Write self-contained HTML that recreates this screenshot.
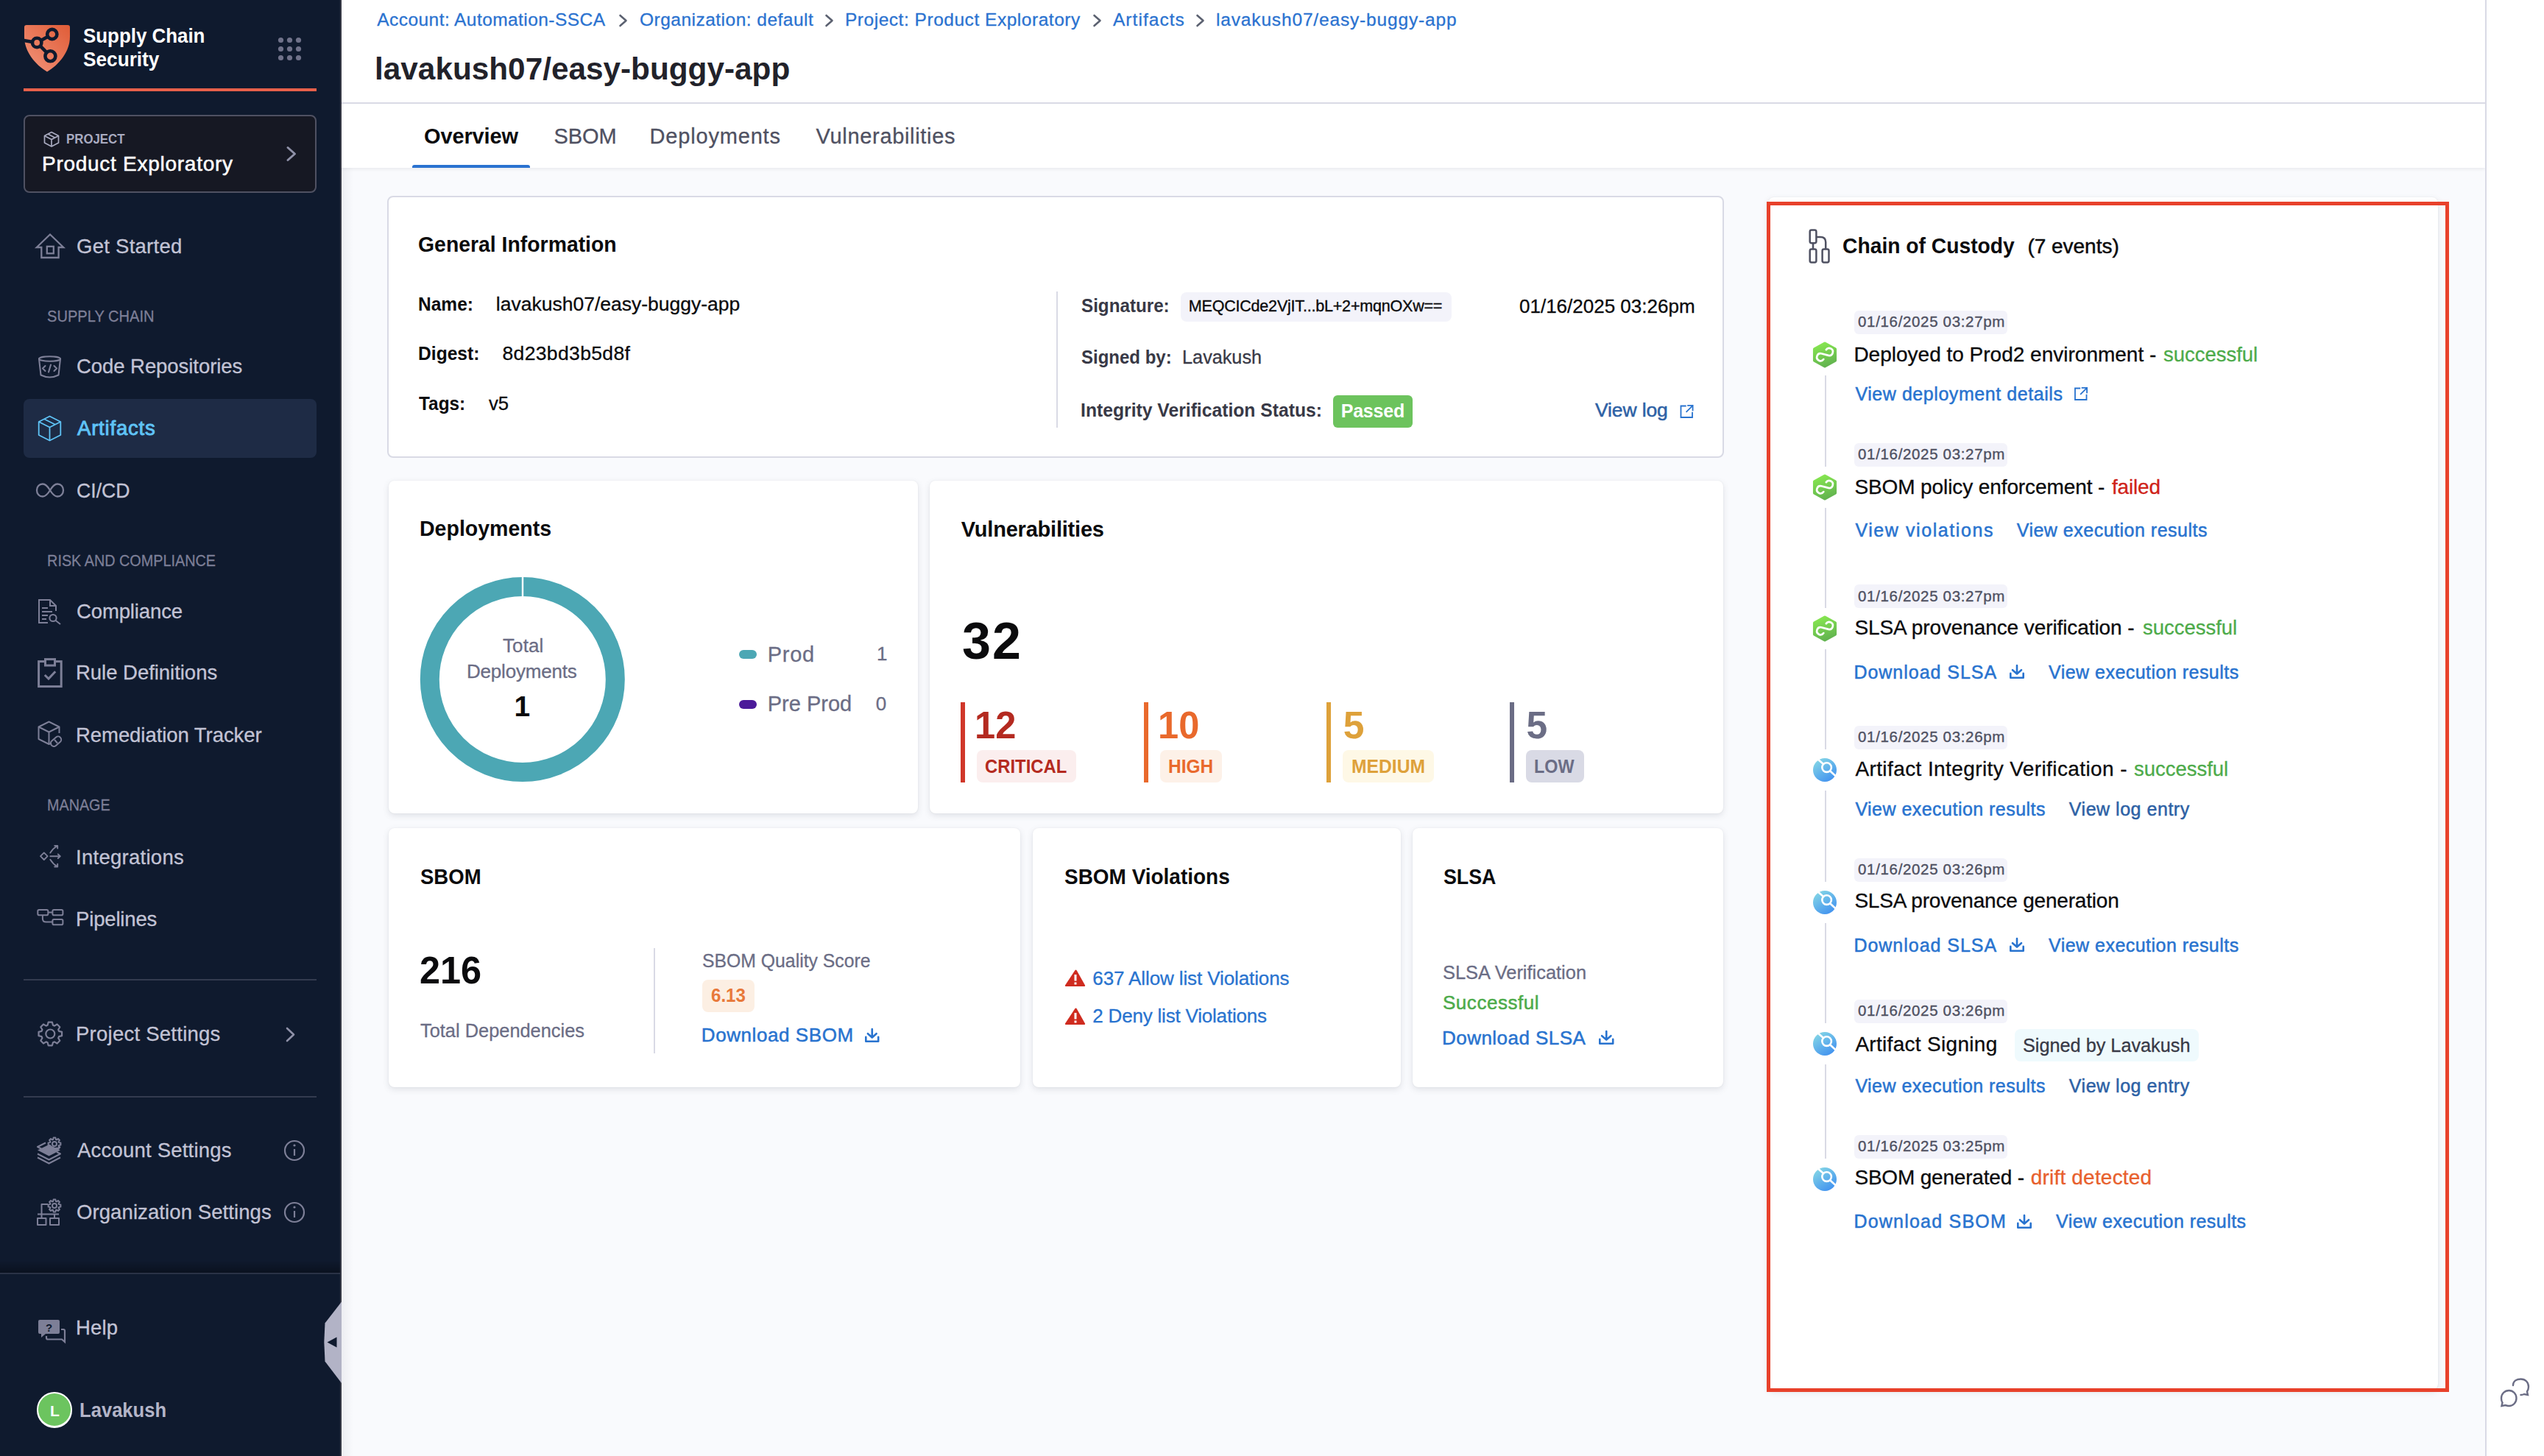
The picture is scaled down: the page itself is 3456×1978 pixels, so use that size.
<!DOCTYPE html>
<html><head><meta charset="utf-8"><title>Supply Chain Security</title>
<style>
html,body{margin:0;padding:0;}
body{width:3456px;height:1978px;position:relative;overflow:hidden;background:#f9fafd;font-family:"Liberation Sans",sans-serif;}
svg{position:absolute;overflow:visible;}
</style></head><body>
<div style="position:absolute;left:464px;top:0px;width:2912px;height:228px;background:#fff;box-shadow:0 2px 4px rgba(96,97,112,0.10);"></div>
<div style="position:absolute;left:464px;top:139px;width:2912px;height:2px;background:#d9dae5;"></div>
<div style="position:absolute;left:3376px;top:0px;width:2px;height:1978px;background:#d9dae5;"></div>
<div style="position:absolute;left:3378px;top:0px;width:78px;height:1978px;background:#fff;"></div>
<div style="position:absolute;left:0px;top:0px;width:464px;height:1978px;background:#0f1a2e;"></div>
<div style="position:absolute;left:462px;top:0px;width:2px;height:1978px;background:#363845;"></div>
<div style="position:absolute;left:464px;top:228px;width:16px;height:1750px;background:linear-gradient(90deg,rgba(40,41,61,0.06),rgba(40,41,61,0));"></div>
<div style="position:absolute;left:32px;top:120px;width:398px;height:4px;background:#e7604a;"></div>
<div style="position:absolute;left:32px;top:156px;width:398px;height:106px;background:#161823;border:2px solid #4f5162;border-radius:8px;box-sizing:border-box;"></div>
<div style="position:absolute;left:32px;top:542px;width:398px;height:80px;background:#1e2b45;border-radius:8px;"></div>
<div style="position:absolute;left:32px;top:1330px;width:398px;height:2px;background:#333b4f;"></div>
<div style="position:absolute;left:32px;top:1489px;width:398px;height:2px;background:#333b4f;"></div>
<div style="position:absolute;left:0px;top:1712px;width:462px;height:18px;background:linear-gradient(rgba(0,0,0,0),rgba(0,0,0,0.35));"></div>
<div style="position:absolute;left:0px;top:1729px;width:462px;height:2px;background:#2a3246;"></div>
<div style="position:absolute;left:526px;top:266px;width:1816px;height:356px;background:#fff;border:2px solid #d9dae5;border-radius:8px;box-sizing:border-box;"></div>
<div style="position:absolute;left:528px;top:653px;width:719px;height:452px;background:#fff;border-radius:8px;box-shadow:0 0 2px rgba(40,41,61,0.07),0 3px 9px rgba(96,97,112,0.16);"></div>
<div style="position:absolute;left:1263px;top:653px;width:1078px;height:452px;background:#fff;border-radius:8px;box-shadow:0 0 2px rgba(40,41,61,0.07),0 3px 9px rgba(96,97,112,0.16);"></div>
<div style="position:absolute;left:528px;top:1125px;width:858px;height:352px;background:#fff;border-radius:8px;box-shadow:0 0 2px rgba(40,41,61,0.07),0 3px 9px rgba(96,97,112,0.16);"></div>
<div style="position:absolute;left:1403px;top:1125px;width:500px;height:352px;background:#fff;border-radius:8px;box-shadow:0 0 2px rgba(40,41,61,0.07),0 3px 9px rgba(96,97,112,0.16);"></div>
<div style="position:absolute;left:1919px;top:1125px;width:422px;height:352px;background:#fff;border-radius:8px;box-shadow:0 0 2px rgba(40,41,61,0.07),0 3px 9px rgba(96,97,112,0.16);"></div>
<div style="position:absolute;left:2402px;top:268px;width:910px;height:1620px;background:#fff;border-radius:8px;box-shadow:0 0 2px rgba(40,41,61,0.07),0 3px 9px rgba(96,97,112,0.16);"></div>
<div style="position:absolute;left:113.00px;top:36.14px;font-size:27px;line-height:27px;font-weight:700;color:#ffffff;letter-spacing:0.000px;white-space:nowrap;transform:scaleX(0.9590);transform-origin:0.00px 0;">Supply Chain</div>
<div style="position:absolute;left:113.00px;top:68.14px;font-size:27px;line-height:27px;font-weight:700;color:#ffffff;letter-spacing:0.000px;white-space:nowrap;transform:scaleX(0.9706);transform-origin:0.00px 0;">Security</div>
<div style="position:absolute;left:89.50px;top:180.26px;font-size:18px;line-height:18px;font-weight:700;color:#a9abc0;letter-spacing:0.000px;white-space:nowrap;transform:scaleX(0.9343);transform-origin:1.00px 0;">PROJECT</div>
<div style="position:absolute;-webkit-text-stroke:0.5px #ffffff;left:57.00px;top:208.80px;font-size:28px;line-height:28px;font-weight:500;color:#ffffff;letter-spacing:0.728px;white-space:nowrap;">Product Exploratory</div>
<div style="position:absolute;-webkit-text-stroke:0.3px #c2c3d5;left:104.00px;top:320.72px;font-size:27.5px;line-height:27.5px;font-weight:400;color:#c2c3d5;letter-spacing:0.267px;white-space:nowrap;">Get Started</div>
<div style="position:absolute;-webkit-text-stroke:0.3px #7d7f97;left:64.00px;top:419.08px;font-size:22px;line-height:22px;font-weight:400;color:#7d7f97;letter-spacing:0.000px;white-space:nowrap;transform:scaleX(0.9122);transform-origin:1.00px 0;">SUPPLY CHAIN</div>
<div style="position:absolute;-webkit-text-stroke:0.3px #c2c3d5;left:104.00px;top:484.22px;font-size:27.5px;line-height:27.5px;font-weight:400;color:#c2c3d5;letter-spacing:-0.061px;white-space:nowrap;">Code Repositories</div>
<div style="position:absolute;left:105.00px;top:568.32px;font-size:27.5px;line-height:27.5px;font-weight:400;color:#5fc3f6;letter-spacing:0.803px;white-space:nowrap;-webkit-text-stroke:0.9px #5fc3f6;">Artifacts</div>
<div style="position:absolute;-webkit-text-stroke:0.3px #c2c3d5;left:104.00px;top:652.52px;font-size:27.5px;line-height:27.5px;font-weight:400;color:#c2c3d5;letter-spacing:0.000px;white-space:nowrap;transform:scaleX(0.9671);transform-origin:1.00px 0;">CI/CD</div>
<div style="position:absolute;-webkit-text-stroke:0.3px #7d7f97;left:64.00px;top:751.08px;font-size:22px;line-height:22px;font-weight:400;color:#7d7f97;letter-spacing:0.000px;white-space:nowrap;transform:scaleX(0.8999);transform-origin:1.00px 0;">RISK AND COMPLIANCE</div>
<div style="position:absolute;-webkit-text-stroke:0.3px #c2c3d5;left:104.00px;top:817.22px;font-size:27.5px;line-height:27.5px;font-weight:400;color:#c2c3d5;letter-spacing:-0.124px;white-space:nowrap;">Compliance</div>
<div style="position:absolute;-webkit-text-stroke:0.3px #c2c3d5;left:103.00px;top:900.42px;font-size:27.5px;line-height:27.5px;font-weight:400;color:#c2c3d5;letter-spacing:-0.030px;white-space:nowrap;">Rule Definitions</div>
<div style="position:absolute;-webkit-text-stroke:0.3px #c2c3d5;left:103.00px;top:984.52px;font-size:27.5px;line-height:27.5px;font-weight:400;color:#c2c3d5;letter-spacing:-0.059px;white-space:nowrap;">Remediation Tracker</div>
<div style="position:absolute;-webkit-text-stroke:0.3px #7d7f97;left:64.00px;top:1082.98px;font-size:22px;line-height:22px;font-weight:400;color:#7d7f97;letter-spacing:0.000px;white-space:nowrap;transform:scaleX(0.8967);transform-origin:1.00px 0;">MANAGE</div>
<div style="position:absolute;-webkit-text-stroke:0.3px #c2c3d5;left:103.00px;top:1150.52px;font-size:27.5px;line-height:27.5px;font-weight:400;color:#c2c3d5;letter-spacing:0.277px;white-space:nowrap;">Integrations</div>
<div style="position:absolute;-webkit-text-stroke:0.3px #c2c3d5;left:103.00px;top:1234.72px;font-size:27.5px;line-height:27.5px;font-weight:400;color:#c2c3d5;letter-spacing:-0.156px;white-space:nowrap;">Pipelines</div>
<div style="position:absolute;-webkit-text-stroke:0.3px #c2c3d5;left:103.00px;top:1391.42px;font-size:27.5px;line-height:27.5px;font-weight:400;color:#c2c3d5;letter-spacing:0.250px;white-space:nowrap;">Project Settings</div>
<div style="position:absolute;-webkit-text-stroke:0.3px #c2c3d5;left:105.00px;top:1548.72px;font-size:27.5px;line-height:27.5px;font-weight:400;color:#c2c3d5;letter-spacing:0.205px;white-space:nowrap;">Account Settings</div>
<div style="position:absolute;-webkit-text-stroke:0.3px #c2c3d5;left:104.00px;top:1632.92px;font-size:27.5px;line-height:27.5px;font-weight:400;color:#c2c3d5;letter-spacing:0.091px;white-space:nowrap;">Organization Settings</div>
<div style="position:absolute;-webkit-text-stroke:0.3px #c2c3d5;left:103.00px;top:1790.32px;font-size:27.5px;line-height:27.5px;font-weight:400;color:#c2c3d5;letter-spacing:0.179px;white-space:nowrap;">Help</div>
<div style="position:absolute;left:107.70px;top:1902.42px;font-size:27.5px;line-height:27.5px;font-weight:700;color:#b4b5c8;letter-spacing:0.000px;white-space:nowrap;transform:scaleX(0.9299);transform-origin:1.00px 0;">Lavakush</div>
<div style="position:absolute;-webkit-text-stroke:0.3px #2a72d0;left:512.30px;top:15.06px;font-size:24.5px;line-height:24.5px;font-weight:400;color:#2a72d0;letter-spacing:0.439px;white-space:nowrap;">Account: Automation-SSCA</div>
<div style="position:absolute;-webkit-text-stroke:0.3px #2a72d0;left:869.00px;top:15.06px;font-size:24.5px;line-height:24.5px;font-weight:400;color:#2a72d0;letter-spacing:0.486px;white-space:nowrap;">Organization: default</div>
<div style="position:absolute;-webkit-text-stroke:0.3px #2a72d0;left:1148.00px;top:15.06px;font-size:24.5px;line-height:24.5px;font-weight:400;color:#2a72d0;letter-spacing:0.527px;white-space:nowrap;">Project: Product Exploratory</div>
<div style="position:absolute;-webkit-text-stroke:0.3px #2a72d0;left:1512.00px;top:15.06px;font-size:24.5px;line-height:24.5px;font-weight:400;color:#2a72d0;letter-spacing:1.033px;white-space:nowrap;">Artifacts</div>
<div style="position:absolute;-webkit-text-stroke:0.3px #2a72d0;left:1652.00px;top:15.06px;font-size:24.5px;line-height:24.5px;font-weight:400;color:#2a72d0;letter-spacing:0.841px;white-space:nowrap;">lavakush07/easy-buggy-app</div>
<div style="position:absolute;left:509.00px;top:71.60px;font-size:43px;line-height:43px;font-weight:700;color:#22222a;letter-spacing:0.000px;white-space:nowrap;transform:scaleX(0.9837);transform-origin:3.00px 0;">lavakush07/easy-buggy-app</div>
<div style="position:absolute;left:576.00px;top:170.85px;font-size:29px;line-height:29px;font-weight:700;color:#0b0b0d;letter-spacing:-0.131px;white-space:nowrap;">Overview</div>
<div style="position:absolute;-webkit-text-stroke:0.3px #4f5162;left:752.60px;top:170.85px;font-size:29px;line-height:29px;font-weight:400;color:#4f5162;letter-spacing:-0.148px;white-space:nowrap;">SBOM</div>
<div style="position:absolute;-webkit-text-stroke:0.3px #4f5162;left:882.50px;top:170.85px;font-size:29px;line-height:29px;font-weight:400;color:#4f5162;letter-spacing:0.826px;white-space:nowrap;">Deployments</div>
<div style="position:absolute;-webkit-text-stroke:0.3px #4f5162;left:1108.60px;top:170.85px;font-size:29px;line-height:29px;font-weight:400;color:#4f5162;letter-spacing:0.674px;white-space:nowrap;">Vulnerabilities</div>
<div style="position:absolute;left:560px;top:224px;width:160px;height:4px;background:#2a72d0;border-radius:3px 3px 0 0;"></div>
<div style="position:absolute;left:567.80px;top:317.95px;font-size:29px;line-height:29px;font-weight:700;color:#0b0b0d;letter-spacing:0.000px;white-space:nowrap;transform:scaleX(0.9786);transform-origin:1.00px 0;">General Information</div>
<div style="position:absolute;left:567.80px;top:400.27px;font-size:26.5px;line-height:26.5px;font-weight:700;color:#0b0b0d;letter-spacing:0.000px;white-space:nowrap;transform:scaleX(0.9236);transform-origin:1.00px 0;">Name:</div>
<div style="position:absolute;-webkit-text-stroke:0.3px #0b0b0d;left:673.80px;top:400.27px;font-size:26.5px;line-height:26.5px;font-weight:400;color:#0b0b0d;letter-spacing:0.003px;white-space:nowrap;">lavakush07/easy-buggy-app</div>
<div style="position:absolute;left:567.80px;top:467.17px;font-size:26.5px;line-height:26.5px;font-weight:700;color:#0b0b0d;letter-spacing:0.000px;white-space:nowrap;transform:scaleX(0.9277);transform-origin:1.00px 0;">Digest:</div>
<div style="position:absolute;-webkit-text-stroke:0.3px #0b0b0d;left:682.50px;top:467.17px;font-size:26.5px;line-height:26.5px;font-weight:400;color:#0b0b0d;letter-spacing:0.353px;white-space:nowrap;">8d23bd3b5d8f</div>
<div style="position:absolute;left:568.80px;top:534.87px;font-size:26.5px;line-height:26.5px;font-weight:700;color:#0b0b0d;letter-spacing:0.000px;white-space:nowrap;transform:scaleX(0.9195);transform-origin:0.00px 0;">Tags:</div>
<div style="position:absolute;-webkit-text-stroke:0.3px #0b0b0d;left:663.60px;top:534.87px;font-size:26.5px;line-height:26.5px;font-weight:400;color:#0b0b0d;letter-spacing:0.000px;white-space:nowrap;transform:scaleX(0.9688);transform-origin:0.00px 0;">v5</div>
<div style="position:absolute;left:1435px;top:396px;width:2px;height:185px;background:#d9dae5;"></div>
<div style="position:absolute;left:1469.00px;top:401.97px;font-size:26.5px;line-height:26.5px;font-weight:700;color:#383946;letter-spacing:0.000px;white-space:nowrap;transform:scaleX(0.9132);transform-origin:0.00px 0;">Signature:</div>
<div style="position:absolute;left:1604px;top:397px;width:368px;height:40px;background:#f3f3fa;border-radius:8px;"></div>
<div style="position:absolute;-webkit-text-stroke:0.35px #0b0b0d;left:1614.80px;top:406.20px;font-size:21.5px;line-height:21.5px;font-weight:500;color:#0b0b0d;letter-spacing:-0.199px;white-space:nowrap;">MEQCICde2VjIT...bL+2+mqnOXw==</div>
<div style="position:absolute;-webkit-text-stroke:0.3px #0b0b0d;left:2063.80px;top:402.77px;font-size:26.5px;line-height:26.5px;font-weight:400;color:#0b0b0d;letter-spacing:0.000px;white-space:nowrap;transform:scaleX(0.9811);transform-origin:1.00px 0;">01/16/2025 03:26pm</div>
<div style="position:absolute;left:1469.00px;top:472.17px;font-size:26.5px;line-height:26.5px;font-weight:700;color:#383946;letter-spacing:0.000px;white-space:nowrap;transform:scaleX(0.9055);transform-origin:0.00px 0;">Signed by:</div>
<div style="position:absolute;-webkit-text-stroke:0.3px #383946;left:1605.70px;top:472.17px;font-size:26.5px;line-height:26.5px;font-weight:400;color:#383946;letter-spacing:0.000px;white-space:nowrap;transform:scaleX(0.9512);transform-origin:2.00px 0;">Lavakush</div>
<div style="position:absolute;left:1468.00px;top:544.27px;font-size:26.5px;line-height:26.5px;font-weight:700;color:#383946;letter-spacing:0.000px;white-space:nowrap;transform:scaleX(0.9318);transform-origin:1.00px 0;">Integrity Verification Status:</div>
<div style="position:absolute;left:1811px;top:537px;width:108px;height:44px;background:#6cc35d;border-radius:6px;"></div>
<div style="position:absolute;left:1821.70px;top:545.54px;font-size:25px;line-height:25px;font-weight:700;color:#ffffff;letter-spacing:-0.198px;white-space:nowrap;">Passed</div>
<div style="position:absolute;-webkit-text-stroke:0.5px #2d61a5;left:2167.00px;top:544.27px;font-size:26.5px;line-height:26.5px;font-weight:500;color:#2d61a5;letter-spacing:-0.135px;white-space:nowrap;">View log</div>
<div style="position:absolute;left:570.00px;top:704.45px;font-size:29px;line-height:29px;font-weight:700;color:#0b0b0d;letter-spacing:0.000px;white-space:nowrap;transform:scaleX(0.9835);transform-origin:1.00px 0;">Deployments</div>
<div style="position:absolute;-webkit-text-stroke:0.3px #6b6d85;left:683.00px;top:863.59px;font-size:26px;line-height:26px;font-weight:400;color:#6b6d85;letter-spacing:0.089px;white-space:nowrap;">Total</div>
<div style="position:absolute;-webkit-text-stroke:0.3px #6b6d85;left:634.00px;top:898.99px;font-size:26px;line-height:26px;font-weight:400;color:#6b6d85;letter-spacing:-0.203px;white-space:nowrap;">Deployments</div>
<div style="position:absolute;left:698.60px;top:939.99px;font-size:39px;line-height:39px;font-weight:700;color:#0b0b0d;letter-spacing:0.000px;white-space:nowrap;">1</div>
<div style="position:absolute;left:1004px;top:883px;width:24px;height:12px;background:#4ca7b4;border-radius:6px;"></div>
<div style="position:absolute;-webkit-text-stroke:0.3px #6b6d85;left:1042.80px;top:874.85px;font-size:29px;line-height:29px;font-weight:400;color:#6b6d85;letter-spacing:0.691px;white-space:nowrap;">Prod</div>
<div style="position:absolute;-webkit-text-stroke:0.3px #6b6d85;left:1191.00px;top:874.59px;font-size:26px;line-height:26px;font-weight:400;color:#6b6d85;letter-spacing:0.000px;white-space:nowrap;">1</div>
<div style="position:absolute;left:1004px;top:951px;width:24px;height:12px;background:#4b1a99;border-radius:6px;"></div>
<div style="position:absolute;-webkit-text-stroke:0.3px #6b6d85;left:1042.80px;top:942.45px;font-size:29px;line-height:29px;font-weight:400;color:#6b6d85;letter-spacing:-0.016px;white-space:nowrap;">Pre Prod</div>
<div style="position:absolute;-webkit-text-stroke:0.3px #6b6d85;left:1189.80px;top:943.49px;font-size:26px;line-height:26px;font-weight:400;color:#6b6d85;letter-spacing:0.000px;white-space:nowrap;">0</div>
<div style="position:absolute;left:1305.80px;top:704.85px;font-size:29px;line-height:29px;font-weight:700;color:#0b0b0d;letter-spacing:-0.216px;white-space:nowrap;">Vulnerabilities</div>
<div style="position:absolute;left:1307.00px;top:835.95px;font-size:70px;line-height:70px;font-weight:700;color:#0b0b0d;letter-spacing:2.069px;white-space:nowrap;">32</div>
<div style="position:absolute;left:1304.5px;top:954px;width:6px;height:109px;background:#d0372a;"></div>
<div style="position:absolute;left:1324.00px;top:960.41px;font-size:51.5px;line-height:51.5px;font-weight:700;color:#b42a20;letter-spacing:0.000px;white-space:nowrap;transform:scaleX(0.9821);transform-origin:3.00px 0;">12</div>
<div style="position:absolute;left:1327px;top:1019px;width:134.5999999999999px;height:44px;background:#fbeeee;border-radius:8px;"></div>
<div style="position:absolute;left:1338.40px;top:1028.84px;font-size:25px;line-height:25px;font-weight:700;color:#b42a20;letter-spacing:0.000px;white-space:nowrap;transform:scaleX(0.9534);transform-origin:1.00px 0;">CRITICAL</div>
<div style="position:absolute;left:1554px;top:954px;width:6px;height:109px;background:#e9692c;"></div>
<div style="position:absolute;left:1573.00px;top:960.41px;font-size:51.5px;line-height:51.5px;font-weight:700;color:#e9692c;letter-spacing:0.000px;white-space:nowrap;transform:scaleX(0.9821);transform-origin:3.00px 0;">10</div>
<div style="position:absolute;left:1576px;top:1019px;width:84px;height:44px;background:#fdf1e8;border-radius:8px;"></div>
<div style="position:absolute;left:1587.00px;top:1028.84px;font-size:25px;line-height:25px;font-weight:700;color:#e9692c;letter-spacing:0.000px;white-space:nowrap;transform:scaleX(0.9761);transform-origin:1.00px 0;">HIGH</div>
<div style="position:absolute;left:1802px;top:954px;width:6px;height:109px;background:#dea13a;"></div>
<div style="position:absolute;left:1824.80px;top:960.41px;font-size:51.5px;line-height:51.5px;font-weight:700;color:#dea13a;letter-spacing:0.000px;white-space:nowrap;">5</div>
<div style="position:absolute;left:1823.8px;top:1019px;width:124.20000000000005px;height:44px;background:#fef8e6;border-radius:8px;"></div>
<div style="position:absolute;left:1835.80px;top:1028.84px;font-size:25px;line-height:25px;font-weight:700;color:#dea13a;letter-spacing:0.000px;white-space:nowrap;transform:scaleX(0.9864);transform-origin:1.00px 0;">MEDIUM</div>
<div style="position:absolute;left:2050.6px;top:954px;width:6px;height:109px;background:#6b6d85;"></div>
<div style="position:absolute;left:2073.50px;top:960.41px;font-size:51.5px;line-height:51.5px;font-weight:700;color:#6b6d85;letter-spacing:0.000px;white-space:nowrap;">5</div>
<div style="position:absolute;left:2072.5px;top:1019px;width:79.5px;height:44px;background:#d9dae5;border-radius:8px;"></div>
<div style="position:absolute;left:2083.70px;top:1028.84px;font-size:25px;line-height:25px;font-weight:700;color:#6b6d85;letter-spacing:0.000px;white-space:nowrap;transform:scaleX(0.9356);transform-origin:1.00px 0;">LOW</div>
<div style="position:absolute;left:571.00px;top:1177.15px;font-size:29px;line-height:29px;font-weight:700;color:#0b0b0d;letter-spacing:0.000px;white-space:nowrap;transform:scaleX(0.9494);transform-origin:0.00px 0;">SBOM</div>
<div style="position:absolute;left:570.00px;top:1293.01px;font-size:51.5px;line-height:51.5px;font-weight:700;color:#0b0b0d;letter-spacing:0.000px;white-space:nowrap;transform:scaleX(0.9786);transform-origin:1.00px 0;">216</div>
<div style="position:absolute;-webkit-text-stroke:0.3px #6b6d85;left:571.00px;top:1387.19px;font-size:26px;line-height:26px;font-weight:400;color:#6b6d85;letter-spacing:0.000px;white-space:nowrap;transform:scaleX(0.9765);transform-origin:0.00px 0;">Total Dependencies</div>
<div style="position:absolute;left:888px;top:1288px;width:2px;height:143px;background:#d9dae5;"></div>
<div style="position:absolute;-webkit-text-stroke:0.3px #6b6d85;left:953.80px;top:1291.99px;font-size:26px;line-height:26px;font-weight:400;color:#6b6d85;letter-spacing:0.000px;white-space:nowrap;transform:scaleX(0.9522);transform-origin:1.00px 0;">SBOM Quality Score</div>
<div style="position:absolute;left:954px;top:1331px;width:71px;height:44px;background:#fcefe3;border-radius:8px;"></div>
<div style="position:absolute;left:966.00px;top:1340.34px;font-size:25px;line-height:25px;font-weight:700;color:#e8793a;letter-spacing:0.000px;white-space:nowrap;transform:scaleX(0.9633);transform-origin:0.00px 0;">6.13</div>
<div style="position:absolute;-webkit-text-stroke:0.5px #2873cf;left:952.80px;top:1393.39px;font-size:26px;line-height:26px;font-weight:500;color:#2873cf;letter-spacing:0.578px;white-space:nowrap;">Download SBOM</div>
<div style="position:absolute;left:1446.40px;top:1176.95px;font-size:29px;line-height:29px;font-weight:700;color:#0b0b0d;letter-spacing:0.000px;white-space:nowrap;transform:scaleX(0.9639);transform-origin:0.00px 0;">SBOM Violations</div>
<div style="position:absolute;-webkit-text-stroke:0.3px #2873cf;left:1484.30px;top:1315.59px;font-size:26px;line-height:26px;font-weight:400;color:#2873cf;letter-spacing:-0.105px;white-space:nowrap;">637 Allow list Violations</div>
<div style="position:absolute;-webkit-text-stroke:0.3px #2873cf;left:1484.30px;top:1367.49px;font-size:26px;line-height:26px;font-weight:400;color:#2873cf;letter-spacing:-0.198px;white-space:nowrap;">2 Deny list Violations</div>
<div style="position:absolute;left:1961.00px;top:1176.95px;font-size:29px;line-height:29px;font-weight:700;color:#0b0b0d;letter-spacing:0.000px;white-space:nowrap;transform:scaleX(0.9238);transform-origin:0.00px 0;">SLSA</div>
<div style="position:absolute;-webkit-text-stroke:0.3px #6b6d85;left:1960.00px;top:1307.99px;font-size:26px;line-height:26px;font-weight:400;color:#6b6d85;letter-spacing:0.000px;white-space:nowrap;transform:scaleX(0.9777);transform-origin:1.00px 0;">SLSA Verification</div>
<div style="position:absolute;-webkit-text-stroke:0.5px #4dab4a;left:1960.00px;top:1348.99px;font-size:26px;line-height:26px;font-weight:500;color:#4dab4a;letter-spacing:0.528px;white-space:nowrap;">Successful</div>
<div style="position:absolute;-webkit-text-stroke:0.5px #2873cf;left:1959.00px;top:1396.79px;font-size:26px;line-height:26px;font-weight:500;color:#2873cf;letter-spacing:0.459px;white-space:nowrap;">Download SLSA</div>
<div style="position:absolute;left:2502.80px;top:319.75px;font-size:29px;line-height:29px;font-weight:700;color:#0b0b0d;letter-spacing:0.000px;white-space:nowrap;transform:scaleX(0.9740);transform-origin:1.00px 0;">Chain of Custody</div>
<div style="position:absolute;-webkit-text-stroke:0.5px #0b0b0d;left:2754.40px;top:320.60px;font-size:28px;line-height:28px;font-weight:500;color:#0b0b0d;letter-spacing:-0.019px;white-space:nowrap;">(7 events)</div>
<div style="position:absolute;left:2400px;top:274px;width:927px;height:1617px;border:5.5px solid #e8412b;box-sizing:border-box;"></div>
<div style="position:absolute;left:2519px;top:422px;width:208px;height:32px;background:#f3f3fa;border-radius:6px;"></div>
<div style="position:absolute;-webkit-text-stroke:0.35px #4f5162;left:2524.00px;top:427.40px;font-size:20.5px;line-height:20.5px;font-weight:500;color:#4f5162;letter-spacing:0.665px;white-space:nowrap;">01/16/2025 03:27pm</div>
<div style="position:absolute;-webkit-text-stroke:0.3px #0b0b0d;left:2518.40px;top:467.90px;font-size:28px;line-height:28px;font-weight:400;color:#0b0b0d;letter-spacing:0.001px;white-space:nowrap;">Deployed to Prod2 environment -</div>
<div style="position:absolute;-webkit-text-stroke:0.3px #4dab4a;left:2939.00px;top:467.90px;font-size:28px;line-height:28px;font-weight:400;color:#4dab4a;letter-spacing:0.000px;white-space:nowrap;transform:scaleX(0.9807);transform-origin:0.00px 0;">successful</div>
<div style="position:absolute;-webkit-text-stroke:0.5px #2873cf;left:2520.40px;top:522.84px;font-size:25px;line-height:25px;font-weight:500;color:#2873cf;letter-spacing:0.562px;white-space:nowrap;">View deployment details</div>
<div style="position:absolute;left:2519px;top:602px;width:208px;height:32px;background:#f3f3fa;border-radius:6px;"></div>
<div style="position:absolute;-webkit-text-stroke:0.35px #4f5162;left:2524.00px;top:607.40px;font-size:20.5px;line-height:20.5px;font-weight:500;color:#4f5162;letter-spacing:0.665px;white-space:nowrap;">01/16/2025 03:27pm</div>
<div style="position:absolute;-webkit-text-stroke:0.3px #0b0b0d;left:2519.40px;top:647.70px;font-size:28px;line-height:28px;font-weight:400;color:#0b0b0d;letter-spacing:-0.101px;white-space:nowrap;">SBOM policy enforcement -</div>
<div style="position:absolute;-webkit-text-stroke:0.3px #cf2318;left:2869.00px;top:647.70px;font-size:28px;line-height:28px;font-weight:400;color:#cf2318;letter-spacing:-0.173px;white-space:nowrap;">failed</div>
<div style="position:absolute;-webkit-text-stroke:0.5px #2873cf;left:2520.40px;top:708.44px;font-size:25px;line-height:25px;font-weight:500;color:#2873cf;letter-spacing:1.578px;white-space:nowrap;">View violations</div>
<div style="position:absolute;-webkit-text-stroke:0.5px #2873cf;left:2739.70px;top:708.44px;font-size:25px;line-height:25px;font-weight:500;color:#2873cf;letter-spacing:0.501px;white-space:nowrap;">View execution results</div>
<div style="position:absolute;left:2519px;top:794.4px;width:208px;height:32px;background:#f3f3fa;border-radius:6px;"></div>
<div style="position:absolute;-webkit-text-stroke:0.35px #4f5162;left:2524.00px;top:799.80px;font-size:20.5px;line-height:20.5px;font-weight:500;color:#4f5162;letter-spacing:0.665px;white-space:nowrap;">01/16/2025 03:27pm</div>
<div style="position:absolute;-webkit-text-stroke:0.3px #0b0b0d;left:2519.40px;top:839.10px;font-size:28px;line-height:28px;font-weight:400;color:#0b0b0d;letter-spacing:-0.097px;white-space:nowrap;">SLSA provenance verification -</div>
<div style="position:absolute;-webkit-text-stroke:0.3px #4dab4a;left:2910.70px;top:839.10px;font-size:28px;line-height:28px;font-weight:400;color:#4dab4a;letter-spacing:0.000px;white-space:nowrap;transform:scaleX(0.9807);transform-origin:0.00px 0;">successful</div>
<div style="position:absolute;-webkit-text-stroke:0.5px #2873cf;left:2518.40px;top:900.64px;font-size:25px;line-height:25px;font-weight:500;color:#2873cf;letter-spacing:0.977px;white-space:nowrap;">Download SLSA</div>
<div style="position:absolute;-webkit-text-stroke:0.5px #2873cf;left:2783.00px;top:900.64px;font-size:25px;line-height:25px;font-weight:500;color:#2873cf;letter-spacing:0.472px;white-space:nowrap;">View execution results</div>
<div style="position:absolute;left:2519px;top:986px;width:208px;height:32px;background:#f3f3fa;border-radius:6px;"></div>
<div style="position:absolute;-webkit-text-stroke:0.35px #4f5162;left:2524.00px;top:991.40px;font-size:20.5px;line-height:20.5px;font-weight:500;color:#4f5162;letter-spacing:0.665px;white-space:nowrap;">01/16/2025 03:26pm</div>
<div style="position:absolute;-webkit-text-stroke:0.3px #0b0b0d;left:2520.40px;top:1030.90px;font-size:28px;line-height:28px;font-weight:400;color:#0b0b0d;letter-spacing:0.399px;white-space:nowrap;">Artifact Integrity Verification -</div>
<div style="position:absolute;-webkit-text-stroke:0.3px #4dab4a;left:2899.00px;top:1030.90px;font-size:28px;line-height:28px;font-weight:400;color:#4dab4a;letter-spacing:0.000px;white-space:nowrap;transform:scaleX(0.9807);transform-origin:0.00px 0;">successful</div>
<div style="position:absolute;-webkit-text-stroke:0.5px #2873cf;left:2520.40px;top:1086.54px;font-size:25px;line-height:25px;font-weight:500;color:#2873cf;letter-spacing:0.468px;white-space:nowrap;">View execution results</div>
<div style="position:absolute;-webkit-text-stroke:0.5px #2d61a5;left:2810.80px;top:1086.54px;font-size:25px;line-height:25px;font-weight:500;color:#2d61a5;letter-spacing:0.526px;white-space:nowrap;">View log entry</div>
<div style="position:absolute;left:2519px;top:1165.9px;width:208px;height:32px;background:#f3f3fa;border-radius:6px;"></div>
<div style="position:absolute;-webkit-text-stroke:0.35px #4f5162;left:2524.00px;top:1171.30px;font-size:20.5px;line-height:20.5px;font-weight:500;color:#4f5162;letter-spacing:0.665px;white-space:nowrap;">01/16/2025 03:26pm</div>
<div style="position:absolute;-webkit-text-stroke:0.3px #0b0b0d;left:2519.40px;top:1210.30px;font-size:28px;line-height:28px;font-weight:400;color:#0b0b0d;letter-spacing:-0.194px;white-space:nowrap;">SLSA provenance generation</div>
<div style="position:absolute;-webkit-text-stroke:0.5px #2873cf;left:2518.40px;top:1272.04px;font-size:25px;line-height:25px;font-weight:500;color:#2873cf;letter-spacing:0.977px;white-space:nowrap;">Download SLSA</div>
<div style="position:absolute;-webkit-text-stroke:0.5px #2873cf;left:2783.00px;top:1272.04px;font-size:25px;line-height:25px;font-weight:500;color:#2873cf;letter-spacing:0.472px;white-space:nowrap;">View execution results</div>
<div style="position:absolute;left:2519px;top:1358px;width:208px;height:32px;background:#f3f3fa;border-radius:6px;"></div>
<div style="position:absolute;-webkit-text-stroke:0.35px #4f5162;left:2524.00px;top:1363.40px;font-size:20.5px;line-height:20.5px;font-weight:500;color:#4f5162;letter-spacing:0.665px;white-space:nowrap;">01/16/2025 03:26pm</div>
<div style="position:absolute;-webkit-text-stroke:0.3px #0b0b0d;left:2520.40px;top:1405.20px;font-size:28px;line-height:28px;font-weight:400;color:#0b0b0d;letter-spacing:0.304px;white-space:nowrap;">Artifact Signing</div>
<div style="position:absolute;-webkit-text-stroke:0.5px #2873cf;left:2520.40px;top:1462.74px;font-size:25px;line-height:25px;font-weight:500;color:#2873cf;letter-spacing:0.468px;white-space:nowrap;">View execution results</div>
<div style="position:absolute;-webkit-text-stroke:0.5px #2d61a5;left:2810.80px;top:1462.74px;font-size:25px;line-height:25px;font-weight:500;color:#2d61a5;letter-spacing:0.526px;white-space:nowrap;">View log entry</div>
<div style="position:absolute;left:2519px;top:1542px;width:208px;height:32px;background:#f3f3fa;border-radius:6px;"></div>
<div style="position:absolute;-webkit-text-stroke:0.35px #4f5162;left:2524.00px;top:1547.40px;font-size:20.5px;line-height:20.5px;font-weight:500;color:#4f5162;letter-spacing:0.665px;white-space:nowrap;">01/16/2025 03:25pm</div>
<div style="position:absolute;-webkit-text-stroke:0.3px #0b0b0d;left:2519.40px;top:1586.00px;font-size:28px;line-height:28px;font-weight:400;color:#0b0b0d;letter-spacing:-0.188px;white-space:nowrap;">SBOM generated -</div>
<div style="position:absolute;-webkit-text-stroke:0.3px #e8602d;left:2758.70px;top:1586.00px;font-size:28px;line-height:28px;font-weight:400;color:#e8602d;letter-spacing:0.200px;white-space:nowrap;">drift detected</div>
<div style="position:absolute;-webkit-text-stroke:0.5px #2873cf;left:2518.40px;top:1647.44px;font-size:25px;line-height:25px;font-weight:500;color:#2873cf;letter-spacing:1.223px;white-space:nowrap;">Download SBOM</div>
<div style="position:absolute;-webkit-text-stroke:0.5px #2873cf;left:2793.00px;top:1647.44px;font-size:25px;line-height:25px;font-weight:500;color:#2873cf;letter-spacing:0.468px;white-space:nowrap;">View execution results</div>
<svg style="left:28px;top:28px;" width="80" height="76" viewBox="28 28 80 76"><defs><linearGradient id="shg" x1="0" y1="1" x2="1" y2="0"><stop offset="0" stop-color="#f2957c"/><stop offset="1" stop-color="#e05c37"/></linearGradient></defs>
<path d="M33,37 Q33,34 36,34 L92,34 Q95,34 95,37 L95,50 C95,70 80,88 64,97.5 C48,88 33,70 33,50 Z" fill="url(#shg)"/>
<g stroke="#0f1a2e" stroke-width="4.6" fill="none"><line x1="28" y1="54.3" x2="44.1" y2="57.1"/><line x1="55.6" y1="55" x2="65" y2="49.7"/><line x1="54.6" y1="62.4" x2="63.5" y2="71.3"/>
<circle cx="70.8" cy="46.5" r="6.6"/><circle cx="50.2" cy="58" r="6.2"/><circle cx="68.4" cy="76.3" r="7"/></g></svg>
<svg style="left:370px;top:44px;" width="50" height="46" viewBox="370 44 50 46"><circle cx="381.5" cy="54.5" r="3.6" fill="#70728a"/><circle cx="381.5" cy="66.5" r="3.6" fill="#70728a"/><circle cx="381.5" cy="78.5" r="3.6" fill="#70728a"/><circle cx="393.5" cy="54.5" r="3.6" fill="#70728a"/><circle cx="393.5" cy="66.5" r="3.6" fill="#70728a"/><circle cx="393.5" cy="78.5" r="3.6" fill="#70728a"/><circle cx="405.5" cy="54.5" r="3.6" fill="#70728a"/><circle cx="405.5" cy="66.5" r="3.6" fill="#70728a"/><circle cx="405.5" cy="78.5" r="3.6" fill="#70728a"/></svg>
<svg style="left:56px;top:175px;" width="30" height="30" viewBox="56 175 30 30"><g stroke="#a9abc0" stroke-width="1.7" fill="none" stroke-linejoin="round"><path d="M70,179.5 L79.5,184.5 L79.5,194 L70,199 L60.5,194 L60.5,184.5 Z"/><path d="M60.5,184.5 L70,189.5 L79.5,184.5 M70,189.5 L70,199 M65,182 L74.5,187"/></g></svg>
<svg style="left:385px;top:195px;" width="22" height="28" viewBox="385 195 22 28"><polyline points="391,200.5 400.5,209 391,217.5" stroke="#8f91a8" stroke-width="3" fill="none" stroke-linecap="round" stroke-linejoin="round"/></svg>
<svg style="left:44px;top:312px;" width="50" height="44" viewBox="44 312 50 44"><g stroke="#7d7f97" stroke-width="2.3" fill="none" stroke-linejoin="miter"><path d="M56.3,336 L49.8,336 L68,318.5 L86.2,336 L79.6,336 L79.6,350 L56.3,350 Z"/><rect x="63.8" y="334.8" width="9" height="9.5"/></g></svg>
<svg style="left:48px;top:478px;" width="40" height="42" viewBox="48 478 40 42"><g stroke="#7d7f97" stroke-width="2.1" fill="none" stroke-linecap="round" stroke-linejoin="round"><ellipse cx="67.5" cy="487.5" rx="14.5" ry="3.3"/><path d="M53,487.5 L55.5,509.5 Q67.5,515.5 79.5,509.5 L82,487.5"/><path d="M61.5,497 L58,500.5 L61.5,504 M73.5,497 L77,500.5 L73.5,504 M69,495.5 L66,505.5"/></g></svg>
<svg style="left:48px;top:561px;" width="40" height="42" viewBox="48 561 40 42"><g stroke="#5fc3f6" stroke-width="1.8" fill="none" stroke-linejoin="round"><path d="M67.5,565.5 L82.3,573 L82.3,591 L67.5,598.5 L52.7,591 L52.7,573 Z"/><path d="M52.7,573 L67.5,580.5 L82.3,573 M67.5,580.5 L67.5,598.5 M60,569.2 L75,576.8"/></g></svg>
<svg style="left:46px;top:650px;" width="44" height="30" viewBox="46 650 44 30"><path d="M68,666 C65,661 62,657.5 58,657.5 C53,657.5 50,661.5 50,666 C50,670.5 53,674.5 58,674.5 C62,674.5 65,671 68,666 C71,661 74,657.5 78,657.5 C83,657.5 86,661.5 86,666 C86,670.5 83,674.5 78,674.5 C74,674.5 71,671 68,666 Z" stroke="#7d7f97" stroke-width="2.3" fill="none"/></svg>
<svg style="left:48px;top:810px;" width="40" height="42" viewBox="48 810 40 42"><g stroke="#7d7f97" stroke-width="2" fill="none"><path d="M76,830 L76,823 L68,815 L53,815 L53,846 L65,846"/><path d="M68,815 L68,823 L76,823"/><path d="M57,826 L65,826 M57,831 L71,831 M57,836 L65,836 M57,841 L63,841"/><circle cx="72" cy="839.5" r="4.6"/><path d="M75.3,842.8 L82,848"/></g></svg>
<svg style="left:48px;top:890px;" width="40" height="48" viewBox="48 890 40 48"><g stroke="#7d7f97" stroke-width="3" fill="none"><rect x="52.6" y="898.6" width="30.6" height="34"/><rect x="61.5" y="895.6" width="13" height="8.4" fill="#0f1a2e"/><polyline points="60.8,917 66,922 75.2,912.2"/></g></svg>
<svg style="left:48px;top:976px;" width="40" height="44" viewBox="48 976 40 44"><g stroke="#7d7f97" stroke-width="2" fill="none" stroke-linejoin="round"><path d="M80.5,996 L80.5,987.5 L66.5,980.5 L52.5,987.5 L52.5,1004 L66.5,1011 L70,1009.3"/><path d="M52.5,987.5 L66.5,994.5 L80.5,987.5 M66.5,994.5 L66.5,1011"/><rect x="68" y="1003" width="16" height="8.5" rx="4.2" transform="rotate(-40 76 1007.2)"/><path d="M74,1005 L78,1009.5"/></g></svg>
<svg style="left:48px;top:1143px;" width="40" height="40" viewBox="48 1143 40 40"><g stroke="#7d7f97" stroke-width="1.9" fill="none" stroke-linecap="round" stroke-linejoin="round"><path d="M59.8,1158.4 L64.6,1163.2 L59.8,1168 L55,1163.2 Z"/><path d="M68.3,1163.2 L81.5,1163.2 M78.8,1160.4 L81.8,1163.2 L78.8,1166"/><path d="M68.3,1158.6 Q72,1152.5 78,1149 M74.2,1148.9 L78.2,1148.9 L78.2,1152.6"/><path d="M68.3,1167.8 Q72,1173.9 78,1177.4 M74.2,1177.5 L78.2,1177.5 L78.2,1173.8"/></g></svg>
<svg style="left:46px;top:1230px;" width="44" height="32" viewBox="46 1230 44 32"><g stroke="#7d7f97" stroke-width="2" fill="none"><rect x="51.3" y="1236" width="14" height="7.2" rx="1.8"/><rect x="71.4" y="1236" width="14" height="7.2" rx="1.8"/><rect x="71.4" y="1249" width="14" height="7.2" rx="1.8"/><path d="M65.3,1239.6 L71.4,1239.6 M57.9,1243.2 L57.9,1248 Q57.9,1252.6 62.5,1252.6 L71.4,1252.6"/></g></svg>
<svg style="left:46px;top:1382px;" width="46" height="46" viewBox="46 1382 46 46"><g stroke="#7d7f97" stroke-width="2.2" fill="none" stroke-linejoin="round"><path d="M80.04,1400.84 L84.08,1401.87 L84.08,1407.13 L80.04,1408.16 L79.19,1410.21 L81.32,1413.80 L77.60,1417.52 L74.01,1415.39 L71.96,1416.24 L70.93,1420.28 L65.67,1420.28 L64.64,1416.24 L62.59,1415.39 L59.00,1417.52 L55.28,1413.80 L57.41,1410.21 L56.56,1408.16 L52.52,1407.13 L52.52,1401.87 L56.56,1400.84 L57.41,1398.79 L55.28,1395.20 L59.00,1391.48 L62.59,1393.61 L64.64,1392.76 L65.67,1388.72 L70.93,1388.72 L71.96,1392.76 L74.01,1393.61 L77.60,1391.48 L81.32,1395.20 L79.19,1398.79 Z"/><circle cx="68.3" cy="1404.5" r="6"/></g></svg>
<svg style="left:383px;top:1392px;" width="22" height="28" viewBox="383 1392 22 28"><polyline points="390,1397 399,1405.5 390,1414" stroke="#8f91a8" stroke-width="2.6" fill="none" stroke-linecap="round" stroke-linejoin="round"/></svg>
<svg style="left:46px;top:1540px;" width="44" height="46" viewBox="46 1540 44 46"><g stroke="#7d7f97" stroke-width="2" fill="none" stroke-linejoin="round"><path d="M62,1552.5 L51,1558 L66.5,1566 L82,1558"/><path d="M51,1567.5 L66.5,1575.5 L82,1567.5 L77,1565" /><path d="M80.01,1552.12 L82.38,1552.60 L82.38,1555.40 L80.01,1555.88 L79.58,1556.93 L80.92,1558.94 L78.94,1560.92 L76.93,1559.58 L75.88,1560.01 L75.40,1562.38 L72.60,1562.38 L72.12,1560.01 L71.07,1559.58 L69.06,1560.92 L67.08,1558.94 L68.42,1556.93 L67.99,1555.88 L65.62,1555.40 L65.62,1552.60 L67.99,1552.12 L68.42,1551.07 L67.08,1549.06 L69.06,1547.08 L71.07,1548.42 L72.12,1547.99 L72.60,1545.62 L75.40,1545.62 L75.88,1547.99 L76.93,1548.42 L78.94,1547.08 L80.92,1549.06 L79.58,1551.07 Z"/><circle cx="74" cy="1554" r="3"/></g>
<path d="M51,1562.5 L66.5,1570.5 L82,1562.5 L66.5,1555 Z" fill="#7d7f97"/><path d="M51,1572.5 L66.5,1580.5 L82,1572.5" stroke="#7d7f97" stroke-width="2" fill="none"/></svg>
<svg style="left:46px;top:1624px;" width="44" height="46" viewBox="46 1624 44 46"><g stroke="#7d7f97" stroke-width="2" fill="none" stroke-linejoin="round"><path d="M65,1636 L56.5,1636 L56.5,1649.5 M51,1649.5 L80,1649.5 M56.5,1649.5 L56.5,1655 M74,1649.5 L74,1655"/><rect x="51" y="1655" width="11.5" height="9"/><rect x="68" y="1655" width="12" height="9"/><path d="M80.01,1636.12 L82.38,1636.60 L82.38,1639.40 L80.01,1639.88 L79.58,1640.93 L80.92,1642.94 L78.94,1644.92 L76.93,1643.58 L75.88,1644.01 L75.40,1646.38 L72.60,1646.38 L72.12,1644.01 L71.07,1643.58 L69.06,1644.92 L67.08,1642.94 L68.42,1640.93 L67.99,1639.88 L65.62,1639.40 L65.62,1636.60 L67.99,1636.12 L68.42,1635.07 L67.08,1633.06 L69.06,1631.08 L71.07,1632.42 L72.12,1631.99 L72.60,1629.62 L75.40,1629.62 L75.88,1631.99 L76.93,1632.42 L78.94,1631.08 L80.92,1633.06 L79.58,1635.07 Z"/><circle cx="74" cy="1638" r="3"/></g></svg>
<svg style="left:382px;top:1546px;" width="36" height="34" viewBox="382 1546 36 34"><g stroke="#7d7f97" stroke-width="2.2" fill="none"><circle cx="400" cy="1563" r="13"/><line x1="400" y1="1561" x2="400" y2="1570"/></g><circle cx="400" cy="1556" r="1.6" fill="#7d7f97"/></svg>
<svg style="left:382px;top:1629.5px;" width="36" height="34" viewBox="382 1629.5 36 34"><g stroke="#7d7f97" stroke-width="2.2" fill="none"><circle cx="400" cy="1646.5" r="13"/><line x1="400" y1="1644.5" x2="400" y2="1653.5"/></g><circle cx="400" cy="1639.5" r="1.6" fill="#7d7f97"/></svg>
<svg style="left:48px;top:1786px;" width="44" height="42" viewBox="48 1786 44 42"><path d="M54,1793 L79,1793 Q81,1793 81,1795 L81,1810 Q81,1812 79,1812 L62,1812 L56,1817 L56,1812 L54,1812 Q52,1812 52,1810 L52,1795 Q52,1793 54,1793 Z" fill="#7d7f97"/>
<path d="M83,1806 L86,1806 Q88,1806 88,1808 L88,1823 L84,1819.5 L65,1819.5 Q63,1819.5 63,1817.5 L63,1815" stroke="#7d7f97" stroke-width="2.2" fill="none"/>
<text x="66.5" y="1808.5" font-family="Liberation Sans" font-weight="700" font-size="15" fill="#0f1a2e" text-anchor="middle">?</text></svg>
<div style="position:absolute;left:49.5px;top:1891px;width:48.5px;height:48.5px;border-radius:50%;background:#ffffff;"></div>
<div style="position:absolute;left:51.8px;top:1893.3px;width:43.9px;height:43.9px;border-radius:50%;background:#6cc45f;"></div>
<div style="position:absolute;left:68.00px;top:1905.82px;font-size:21px;line-height:21px;font-weight:700;color:#ffffff;letter-spacing:0.000px;white-space:nowrap;">L</div>
<svg style="left:436px;top:1764px;" width="28" height="118" viewBox="436 1764 28 118"><path d="M464,1768.5 L441.5,1797.5 L440.3,1823 L441.5,1849.5 L464,1879 Z" fill="#b2b3c6"/><path d="M444.5,1823.5 L457.5,1816.5 L457.5,1830.5 Z" fill="#0f1a2e"/></svg>
<svg style="left:837px;top:16px;" width="20" height="26" viewBox="837 16 20 26"><polyline points="842.5,21 850.5,28 842.5,35" stroke="#5b6170" stroke-width="2.6" fill="none" stroke-linecap="round" stroke-linejoin="round"/></svg>
<svg style="left:1117px;top:16px;" width="20" height="26" viewBox="1117 16 20 26"><polyline points="1122.5,21 1130.5,28 1122.5,35" stroke="#5b6170" stroke-width="2.6" fill="none" stroke-linecap="round" stroke-linejoin="round"/></svg>
<svg style="left:1481px;top:16px;" width="20" height="26" viewBox="1481 16 20 26"><polyline points="1486.5,21 1494.5,28 1486.5,35" stroke="#5b6170" stroke-width="2.6" fill="none" stroke-linecap="round" stroke-linejoin="round"/></svg>
<svg style="left:1621px;top:16px;" width="20" height="26" viewBox="1621 16 20 26"><polyline points="1626.5,21 1634.5,28 1626.5,35" stroke="#5b6170" stroke-width="2.6" fill="none" stroke-linecap="round" stroke-linejoin="round"/></svg>
<svg style="left:2278px;top:546px;" width="26" height="26" viewBox="2278 546 26 26"><g stroke="#2873cf" stroke-width="1.8" fill="none" stroke-linecap="square" stroke-linejoin="miter"><path d="M2289.77,551.48 L2283.48,551.48 L2283.48,567.02 L2299.02,567.02 L2299.02,560.73"/><path d="M2293.1,550.925 L2299.575,550.925 L2299.575,557.4 M2299.575,550.925 L2291.25,559.25"/></g></svg>
<svg style="left:1170px;top:1393px;" width="30" height="28" viewBox="1170 1393 30 28"><g stroke="#2873cf" stroke-width="2.6" fill="none" stroke-linecap="round" stroke-linejoin="round"><path d="M1184.75,1398 L1184.75,1409.54 M1178.9,1404.22 L1184.75,1409.54 L1190.6,1404.22"/><path d="M1176.3,1408.78 L1176.3,1414.7 L1193.2,1414.7 L1193.2,1408.78"/></g></svg>
<svg style="left:2167px;top:1396px;" width="30" height="28" viewBox="2167 1396 30 28"><g stroke="#2873cf" stroke-width="2.6" fill="none" stroke-linecap="round" stroke-linejoin="round"><path d="M2182.25,1401 L2182.25,1412.54 M2176.1,1407.22 L2182.25,1412.54 L2188.4,1407.22"/><path d="M2173.3,1411.78 L2173.3,1417.7 L2191.2,1417.7 L2191.2,1411.78"/></g></svg>
<svg style="left:1444px;top:1314px;" width="34" height="28" viewBox="1444 1314 34 28"><path d="M1460.5,1318 Q1461.5,1317 1462.5,1318 L1474,1338.5 Q1474.5,1340 1473,1340 L1448,1340 Q1446.5,1340 1447,1338.5 Z" fill="#cf2b1f"/><rect x="1459.5" y="1324" width="3" height="8.5" fill="#fff"/><rect x="1459.5" y="1334.5" width="3" height="3" fill="#fff"/></svg>
<svg style="left:1444px;top:1366px;" width="34" height="28" viewBox="1444 1366 34 28"><path d="M1460.5,1370 Q1461.5,1369 1462.5,1370 L1474,1390.5 Q1474.5,1392 1473,1392 L1448,1392 Q1446.5,1392 1447,1390.5 Z" fill="#cf2b1f"/><rect x="1459.5" y="1376" width="3" height="8.5" fill="#fff"/><rect x="1459.5" y="1386.5" width="3" height="3" fill="#fff"/></svg>
<svg style="left:560px;top:773px;" width="300" height="300" viewBox="560 773 300 300"><circle cx="709.8" cy="923" r="126" stroke="#4ca7b4" stroke-width="26" fill="none"/><rect x="708.8" y="780" width="2.4" height="30" fill="#fff"/></svg>
<svg style="left:2450px;top:305px;" width="42" height="58" viewBox="2450 305 42 58"><g stroke="#4f5162" stroke-width="2.5" fill="none"><rect x="2458.7" y="312.5" width="8.7" height="17.8" rx="2.2"/><rect x="2458.7" y="338.5" width="8.7" height="18" rx="2.2"/><rect x="2475.6" y="338.5" width="8.9" height="18" rx="2.2"/><path d="M2463,330.3 L2463,338.5 M2467.4,322 L2473,322 Q2480.2,322 2480.2,329 L2480.2,338.5"/></g></svg>
<div style="position:absolute;left:2479px;top:510px;width:2px;height:124px;background:#d9dae5;"></div>
<div style="position:absolute;left:2479px;top:690px;width:2px;height:136.20000000000005px;background:#d9dae5;"></div>
<div style="position:absolute;left:2479px;top:882.2px;width:2px;height:135.5px;background:#d9dae5;"></div>
<div style="position:absolute;left:2479px;top:1073.7px;width:2px;height:124.29999999999995px;background:#d9dae5;"></div>
<div style="position:absolute;left:2479px;top:1254px;width:2px;height:135.5px;background:#d9dae5;"></div>
<div style="position:absolute;left:2479px;top:1445.5px;width:2px;height:128.0px;background:#d9dae5;"></div>
<svg style="left:2455px;top:457px;" width="50" height="50" viewBox="2455 457 50 50"><defs><linearGradient id="hg0" x1="0.3" y1="0" x2="0.6" y2="1"><stop offset="0" stop-color="#86e650"/><stop offset="1" stop-color="#62b34f"/></linearGradient></defs><path d="M2479.00,466.40 L2493.05,474.20 L2493.05,489.80 L2479.00,497.60 L2464.95,489.80 L2464.95,474.20 Z" fill="url(#hg0)" stroke="url(#hg0)" stroke-width="4" stroke-linejoin="round"/><path d="M2477.30,488.07 A5.0,5.0 0 1 1 2474.07,480.28 L2484.03,482.92 A5.0,5.0 0 1 0 2480.80,475.13" stroke="#fff" stroke-width="2.7" fill="none" stroke-linecap="round" stroke-linejoin="round"/></svg>
<svg style="left:2455px;top:637px;" width="50" height="50" viewBox="2455 637 50 50"><defs><linearGradient id="hg1" x1="0.3" y1="0" x2="0.6" y2="1"><stop offset="0" stop-color="#86e650"/><stop offset="1" stop-color="#62b34f"/></linearGradient></defs><path d="M2479.00,646.40 L2493.05,654.20 L2493.05,669.80 L2479.00,677.60 L2464.95,669.80 L2464.95,654.20 Z" fill="url(#hg1)" stroke="url(#hg1)" stroke-width="4" stroke-linejoin="round"/><path d="M2477.30,668.07 A5.0,5.0 0 1 1 2474.07,660.28 L2484.03,662.92 A5.0,5.0 0 1 0 2480.80,655.13" stroke="#fff" stroke-width="2.7" fill="none" stroke-linecap="round" stroke-linejoin="round"/></svg>
<svg style="left:2455px;top:829.2px;" width="50" height="50" viewBox="2455 829.2 50 50"><defs><linearGradient id="hg2" x1="0.3" y1="0" x2="0.6" y2="1"><stop offset="0" stop-color="#86e650"/><stop offset="1" stop-color="#62b34f"/></linearGradient></defs><path d="M2479.00,838.60 L2493.05,846.40 L2493.05,862.00 L2479.00,869.80 L2464.95,862.00 L2464.95,846.40 Z" fill="url(#hg2)" stroke="url(#hg2)" stroke-width="4" stroke-linejoin="round"/><path d="M2477.30,860.27 A5.0,5.0 0 1 1 2474.07,852.48 L2484.03,855.12 A5.0,5.0 0 1 0 2480.80,847.33" stroke="#fff" stroke-width="2.7" fill="none" stroke-linecap="round" stroke-linejoin="round"/></svg>
<svg style="left:2455px;top:1020.7px;" width="50" height="50" viewBox="2455 1020.7 50 50"><defs><linearGradient id="cg3" x1="0.2" y1="0.1" x2="0.8" y2="1"><stop offset="0" stop-color="#80d2e6"/><stop offset="1" stop-color="#3f8ff0"/></linearGradient></defs>
<circle cx="2479" cy="1045.7" r="16" fill="url(#cg3)"/>
<g stroke="#fff" stroke-width="2.6" fill="none"><circle cx="2481.6" cy="1042.3" r="6.3"/><line x1="2469" y1="1030.7" x2="2477" y2="1037.7"/><line x1="2486" y1="1046.9" x2="2494" y2="1054.2"/></g></svg>
<svg style="left:2455px;top:1201px;" width="50" height="50" viewBox="2455 1201 50 50"><defs><linearGradient id="cg4" x1="0.2" y1="0.1" x2="0.8" y2="1"><stop offset="0" stop-color="#80d2e6"/><stop offset="1" stop-color="#3f8ff0"/></linearGradient></defs>
<circle cx="2479" cy="1226" r="16" fill="url(#cg4)"/>
<g stroke="#fff" stroke-width="2.6" fill="none"><circle cx="2481.6" cy="1222.6" r="6.3"/><line x1="2469" y1="1211" x2="2477" y2="1218"/><line x1="2486" y1="1227.2" x2="2494" y2="1234.5"/></g></svg>
<svg style="left:2455px;top:1392.5px;" width="50" height="50" viewBox="2455 1392.5 50 50"><defs><linearGradient id="cg5" x1="0.2" y1="0.1" x2="0.8" y2="1"><stop offset="0" stop-color="#80d2e6"/><stop offset="1" stop-color="#3f8ff0"/></linearGradient></defs>
<circle cx="2479" cy="1417.5" r="16" fill="url(#cg5)"/>
<g stroke="#fff" stroke-width="2.6" fill="none"><circle cx="2481.6" cy="1414.1" r="6.3"/><line x1="2469" y1="1402.5" x2="2477" y2="1409.5"/><line x1="2486" y1="1418.7" x2="2494" y2="1426.0"/></g></svg>
<svg style="left:2455px;top:1576.5px;" width="50" height="50" viewBox="2455 1576.5 50 50"><defs><linearGradient id="cg6" x1="0.2" y1="0.1" x2="0.8" y2="1"><stop offset="0" stop-color="#80d2e6"/><stop offset="1" stop-color="#3f8ff0"/></linearGradient></defs>
<circle cx="2479" cy="1601.5" r="16" fill="url(#cg6)"/>
<g stroke="#fff" stroke-width="2.6" fill="none"><circle cx="2481.6" cy="1598.1" r="6.3"/><line x1="2469" y1="1586.5" x2="2477" y2="1593.5"/><line x1="2486" y1="1602.7" x2="2494" y2="1610.0"/></g></svg>
<svg style="left:2813px;top:522px;" width="28" height="28" viewBox="2813 522 28 28"><g stroke="#2873cf" stroke-width="1.8" fill="none" stroke-linecap="square" stroke-linejoin="miter"><path d="M2825.27,527.48 L2818.98,527.48 L2818.98,543.02 L2834.52,543.02 L2834.52,536.73"/><path d="M2828.6,526.925 L2835.075,526.925 L2835.075,533.4 M2835.075,526.925 L2826.75,535.25"/></g></svg>
<svg style="left:2726px;top:897.8px;" width="30" height="30" viewBox="2726 897.8 30 30"><g stroke="#2873cf" stroke-width="2.6" fill="none" stroke-linecap="round" stroke-linejoin="round"><path d="M2740.0,903.8 L2740.0,915.3399999999999 M2734.0,910.02 L2740.0,915.3399999999999 L2746.0,910.02"/><path d="M2731.3,914.5799999999999 L2731.3,920.5 L2748.7,920.5 L2748.7,914.5799999999999"/></g></svg>
<svg style="left:2726px;top:1269.2px;" width="30" height="30" viewBox="2726 1269.2 30 30"><g stroke="#2873cf" stroke-width="2.6" fill="none" stroke-linecap="round" stroke-linejoin="round"><path d="M2740.0,1275.2 L2740.0,1286.74 M2734.0,1281.42 L2740.0,1286.74 L2746.0,1281.42"/><path d="M2731.3,1285.98 L2731.3,1291.9 L2748.7,1291.9 L2748.7,1285.98"/></g></svg>
<svg style="left:2736px;top:1644.6px;" width="30" height="30" viewBox="2736 1644.6 30 30"><g stroke="#2873cf" stroke-width="2.6" fill="none" stroke-linecap="round" stroke-linejoin="round"><path d="M2750.0,1650.6 L2750.0,1662.1399999999999 M2744.0,1656.82 L2750.0,1662.1399999999999 L2756.0,1656.82"/><path d="M2741.3,1661.3799999999999 L2741.3,1667.3 L2758.7,1667.3 L2758.7,1661.3799999999999"/></g></svg>
<div style="position:absolute;left:2737px;top:1398px;width:250px;height:43.5px;background:#effafd;border-radius:8px;"></div>
<div style="position:absolute;-webkit-text-stroke:0.3px #383946;left:2748.00px;top:1406.89px;font-size:26px;line-height:26px;font-weight:400;color:#383946;letter-spacing:0.000px;white-space:nowrap;transform:scaleX(0.9711);transform-origin:1.00px 0;">Signed by Lavakush</div>
<svg style="left:3392px;top:1866px;" width="50" height="50" viewBox="3392 1866 50 50"><g stroke="#6b6d85" stroke-width="2.4" fill="none" stroke-linecap="round"><path d="M3414,1882 C3414,1876 3419,1873.5 3424.5,1873.5 C3431,1873.5 3435,1878 3435,1884 C3435,1887 3434,1889 3433,1890.5 L3434,1895 L3429,1894 C3428,1894.5 3426.5,1895 3424.5,1895"/><path d="M3418.5,1899.5 C3418.5,1905.5 3414,1910 3408.5,1910 C3406.5,1910 3405,1909.5 3403.5,1909 L3398.5,1910 L3399.5,1905.5 C3398.5,1904 3398,1901.5 3398,1899.5 C3398,1893.5 3402.5,1889 3408.5,1889 C3414,1889 3418.5,1893.5 3418.5,1899.5 Z"/></g></svg>
</body></html>
